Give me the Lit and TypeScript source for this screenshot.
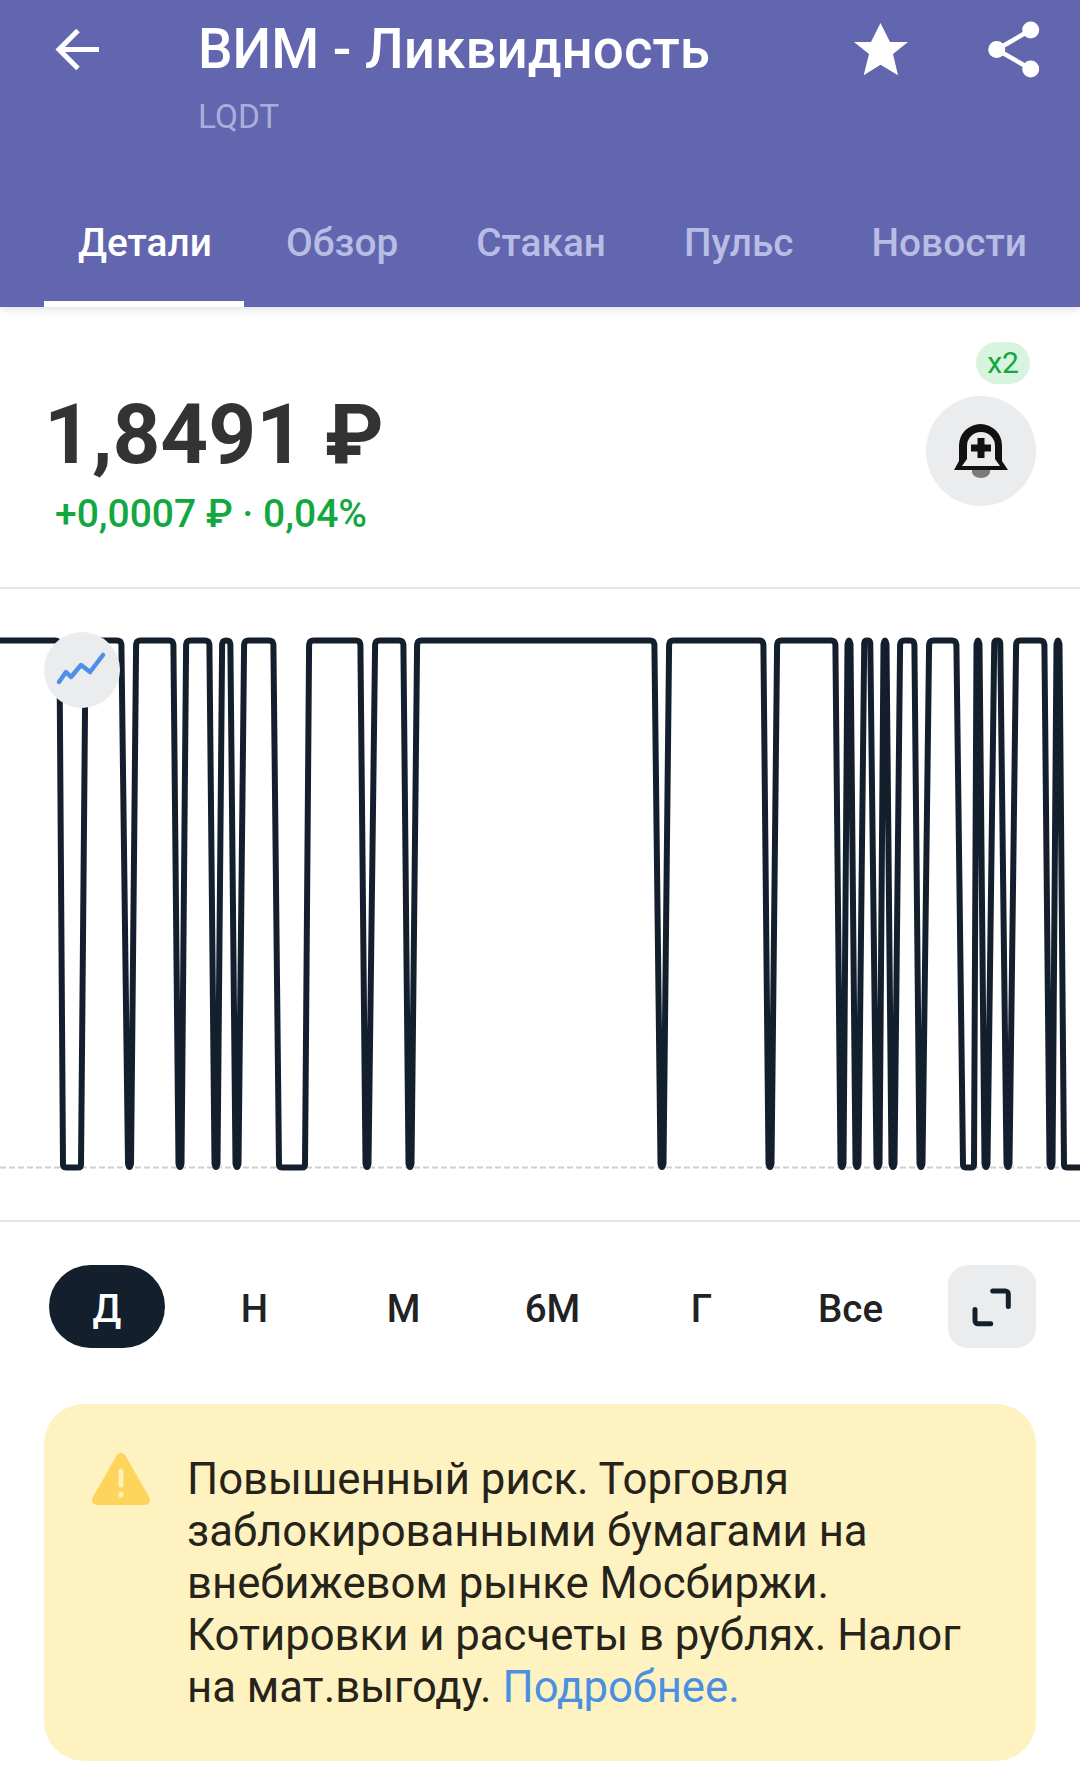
import { LitElement, html, css, svg } from "lit";
import { customElement } from "lit/decorators.js";

const T = 640.5;
const B = 1167.5;
const tops: [number, number][] = [[-8,59],[86,121],[136.5,173],[186.5,209],[222.5,230],[244.5,273],[309.5,360],[375.5,403],[417.5,654],[669.5,763],[777.5,835],[849,849],[864.5,870],[885,885],[900.5,914],[929.5,956],[978,978],[994.5,1000],[1016.5,1044],[1058,1058]];
const bottoms: [number, number][] = [[63,81],[129.5,129.5],[180,180],[216,216],[237,237],[279,305],[367,367],[410,410],[662,662],[770,770],[842,842],[857,857],[878,878],[893,893],[921,921],[963,974],[986,986],[1008,1008],[1051,1051],[1064,1090]];

function chartPath(): string {
  let d = "";
  tops.forEach(([a, b], i) => {
    const r = Math.min(4, (b - a) / 2);
    if (i === 0) d += `M${a} ${T}L${b - r} ${T}`;
    else if (a === b) d += `L${a - 1.5} ${T + 4}Q${a} ${T - 4} ${a + 1.5} ${T + 4}`;
    else d += `L${a - r * 0.1} ${T + r}Q${a} ${T} ${a + r} ${T}L${b - r} ${T}`;
    const bt = bottoms[i];
    if (!bt) return;
    if (a !== b) d += `Q${b} ${T} ${b + r * 0.1} ${T + r}`;
    if (bt[0] === bt[1]) d += `L${bt[0] - 1.5} ${B - 4}Q${bt[0]} ${B + 3} ${bt[0] + 1.5} ${B - 4}`;
    else d += `L${bt[0]} ${B - 3}Q${bt[0]} ${B} ${bt[0] + 3} ${B}L${bt[1] - 3} ${B}` + (i < tops.length - 1 ? `Q${bt[1]} ${B} ${bt[1]} ${B - 3}` : "");
  });
  return d;
}

@customElement("app-root")
export class AppRoot extends LitElement {
  static styles = css`
    :host { display: block; width: 1080px; height: 1771px; overflow: hidden; background: #fff; font-family: Roboto, "Noto Sans", sans-serif; position: relative; }
    svg { display: block; }
    .header { height: 307px; background: #6166ae; display: flex; flex-direction: column; box-sizing: border-box; box-shadow: 0 2px 8px rgba(60,60,110,.18); position: relative; z-index: 1; }
    .top { display: flex; height: 140px; position: relative; padding-left: 55px; }
    .back { width: 46px; height: 46px; margin-top: 27px; flex: none; }
    .titles { margin-left: 97px; flex: 1; padding-top: 18px; }
    .title { font-size: 54.8px; line-height: 63px; font-weight: 500; color: #fff; white-space: nowrap; }
    .sub { font-size: 33.4px; line-height: 36px; color: #a9aedb; margin-top: 18px; }
    .star { width: 56px; height: 56px; margin-top: 22px; flex: none; }
    .share { width: 54px; height: 58px; margin: 21px 38px 0 78px; flex: none; }
    .tabs { display: flex; margin-top: auto; padding-left: 44px; gap: 10px; }
    .tab { padding: 21px 34px 0; height: 107px; box-sizing: border-box; font-size: 38.8px; font-weight: 500; line-height: 44px; color: #b9bde6; white-space: nowrap; }
    .tab.on { color: #fff; border-bottom: 6px solid #fff; width: 200px; padding-right: 0; margin-right: -2px; }
    .quote { height: 282px; box-sizing: border-box; display: flex; justify-content: space-between; border-bottom: 2px solid #e5e5e5; }
    .price { padding: 86px 0 0 44px; }
    .big { font-size: 83.5px; line-height: 84px; font-weight: 700; color: #333; }
    .chg { font-size: 39px; line-height: 44px; font-weight: 500; color: #12a83f; margin: 15px 0 0 11px; }
    .alert { width: 110px; margin: 35px 44px 0 0; display: flex; flex-direction: column; align-items: flex-end; }
    .badge { width: 54px; height: 42px; border-radius: 21px; background: #d8f3de; color: #12a83f; font-size: 30px; line-height: 42px; text-align: center; margin-right: 6px; }
    .bell { width: 110px; height: 110px; border-radius: 50%; background: #ebecee; margin-top: 12px; display: flex; align-items: center; justify-content: center; }
    .chart { height: 633px; position: relative; border-bottom: 2px solid #e5e5e5; box-sizing: border-box; }
    .chart > svg { position: absolute; left: 0; top: -589px; }
    .mode { position: absolute; left: 44px; top: 43px; width: 76px; height: 76px; border-radius: 50%; background: #ebecee; display: flex; align-items: center; justify-content: center; }
    .periods { display: flex; padding: 43px 0 0 31px; height: 83px; }
    .p { width: 149px; height: 83px; display: flex; align-items: center; justify-content: center; font-size: 38.5px; font-weight: 500; color: #222; }
    .p span { display: block; box-sizing: border-box; height: 83px; padding-top: 4px; line-height: 80px; text-align: center; }
    .p.on span { width: 116px; margin-left: 3px; border-radius: 41.5px; background: #141f2e; color: #fff; }
    .expand { width: 88px; height: 83px; margin-left: 23px; border-radius: 20px; background: #ebecee; display: flex; align-items: center; justify-content: center; }
    .note { margin: 56px 44px 0 44px; height: 357px; box-sizing: border-box; border-radius: 40px; background: #fdf2c0; display: flex; padding: 49px 40px 0 48px; }
    .warn { width: 58px; height: 52px; flex: none; }
    .note p { margin: 0 0 0 37px; font-size: 43.7px; line-height: 52px; color: #26231a; }
    .note a { color: #4a8fe0; }
  `;

  render() {
    const periods = ["Д", "Н", "М", "6М", "Г", "Все"];
    return html`
      <div class="header">
        <div class="top">
          <svg class="back" viewBox="0 0 46 46"><path d="M44 22.500H4M23 3.500 4 22.500l19 19" fill="none" stroke="#fff" stroke-width="5"/></svg>
          <div class="titles">
            <div class="title">ВИМ - Ликвидность</div>
            <div class="sub">LQDT</div>
          </div>
          <svg class="star" viewBox="0 0 56 56"><path d="M26.500 1 36 20H54L39 32l5 21.300-17.500-10.600L9.700 53.300 15 32 0 20H17z" fill="#fff"/></svg>
          <svg class="share" viewBox="0 0 54 58"><path d="M42.700 9 8.700 28.500l34 19.500" fill="none" stroke="#fff" stroke-width="4.500"/><circle cx="42.700" cy="9" r="8.500" fill="#fff"/><circle cx="8.700" cy="28.500" r="8.500" fill="#fff"/><circle cx="42.700" cy="48" r="8.500" fill="#fff"/></svg>
        </div>
        <div class="tabs">
          <div class="tab on">Детали</div>
          <div class="tab">Обзор</div>
          <div class="tab">Стакан</div>
          <div class="tab">Пульс</div>
          <div class="tab">Новости</div>
        </div>
      </div>
      <div class="quote">
        <div class="price">
          <div class="big">1,8491 ₽</div>
          <div class="chg">+0,0007 ₽ · 0,04%</div>
        </div>
        <div class="alert">
          <div class="badge">x2</div>
          <div class="bell">
            <svg width="56" height="56" viewBox="0 0 56 56"><path d="M19 46h18v3a9 6 0 0 1-18 0z" fill="#7b7b7b"/><path d="M1 47l5-9V22.500a21.500 21.500 0 0 1 43 0V38l6 9z" fill="#111"/><path d="M14 36V23a14 14 0 0 1 28 0v13l5 7H9z" fill="#ebecee"/><path d="M24.500 15h7v6.500H38v7h-6.500V35h-7v-6.500H18v-7h6.500z" fill="#111"/></svg>
          </div>
        </div>
      </div>
      <div class="chart">
        <svg width="1080" height="1200" viewBox="0 0 1080 1200">
          ${svg`<line x1="0" x2="1080" y1="1167.500" y2="1167.500" stroke="#cfcfcf" stroke-width="2" stroke-dasharray="6 3"/>`}
          ${svg`<path d="${chartPath()}" fill="none" stroke="#141f2e" stroke-width="6" stroke-linejoin="round" stroke-linecap="round"/>`}
        </svg>
        <div class="mode">
          <svg width="76" height="76" viewBox="0 0 76 76"><path d="M15 50l7-10 5 5 10-12 9 7 13-17" fill="none" stroke="#4f8fe6" stroke-width="4.500" stroke-linecap="round" stroke-linejoin="round"/></svg>
        </div>
      </div>
      <div class="periods">
        ${periods.map((p, i) => html`<div class="p ${i === 0 ? "on" : ""}"><span>${p}</span></div>`)}
        <div class="expand">
          <svg width="44" height="44" viewBox="0 0 44 44"><path d="M22.700 6H35.300a3 3 0 0 1 3 3V21.500M5 24.500V35.800a3 3 0 0 0 3 3H20.700" fill="none" stroke="#141f2e" stroke-width="5" stroke-linecap="round"/></svg>
        </div>
      </div>
      <div class="note">
        <svg class="warn" viewBox="0 0 58 52"><path d="M29 5 53 47H5z" fill="#fdd45c" stroke="#fdd45c" stroke-width="10" stroke-linejoin="round"/><path d="M29 18V32M29 41V42" stroke="#fdf0b8" stroke-width="5" stroke-linecap="round"/></svg>
        <p>Повышенный риск. Торговля заблокированными бумагами на внебижевом рынке Мосбиржи. Котировки и расчеты в рублях. Налог на мат.выгоду. <a>Подробнее.</a></p>
      </div>
    `;
  }
}
